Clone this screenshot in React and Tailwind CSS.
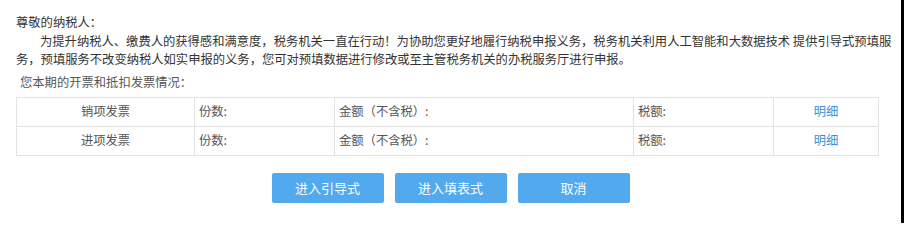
import React from "react";

const font = { fontFamily: '"Noto Sans CJK SC", "Noto Sans", sans-serif' };

function Row({ label }) {
  return (
    <div className="flex h-[29px] border-b border-[#e3e3e3] text-[12.3px] text-[#555]">
      <div className="w-[178px] border-r border-[#e3e3e3] flex items-center justify-center">{label}</div>
      <div className="w-[140px] border-r border-[#e3e3e3] flex items-center pl-[4px]">份数:</div>
      <div className="w-[299px] border-r border-[#e3e3e3] flex items-center pl-[4px]">金额（不含税）:</div>
      <div className="w-[140px] border-r border-[#e3e3e3] flex items-center pl-[4px]">税额:</div>
      <div className="flex-1 flex items-center justify-center text-[#3c8fd8]">明细</div>
    </div>
  );
}

export default function App() {
  return (
    <div className="flex w-[904px] h-[223px] bg-white overflow-hidden" style={font}>
      <div className="flex-1 flex flex-col">
        <div className="pl-[16px] pt-[13px] text-[12.3px] leading-[18.5px] text-[#333] whitespace-nowrap">
          <div>尊敬的纳税人：</div>
          <div className="pl-[24px]">
            为提升纳税人、缴费人的获得感和满意度，税务机关一直在行动！为协助您更好地履行纳税申报义务，税务机关利用人工智能和大数据技术 提供引导式预填服
          </div>
          <div>务，预填服务不改变纳税人如实申报的义务，您可对预填数据进行修改或至主管税务机关的办税服务厅进行申报。</div>
          <div className="mt-[4.5px] pl-[4px] text-[#555]">您本期的开票和抵扣发票情况：</div>
        </div>
        <div className="ml-[16px] mt-[5px] w-[863px] border-t border-l border-r border-[#e3e3e3]">
          <Row label="销项发票" />
          <Row label="进项发票" />
        </div>
        <div className="mt-[17px] flex justify-center gap-[11px]">
          <button className="w-[112px] h-[30px] rounded-[2px] bg-[#52a9ee] text-white text-[13px]">进入引导式</button>
          <button className="w-[112px] h-[30px] rounded-[2px] bg-[#52a9ee] text-white text-[13px]">进入填表式</button>
          <button className="w-[112px] h-[30px] rounded-[2px] bg-[#52a9ee] text-white text-[13px]">取消</button>
        </div>
      </div>
      <div className="w-[3px] h-full bg-black" />
    </div>
  );
}
